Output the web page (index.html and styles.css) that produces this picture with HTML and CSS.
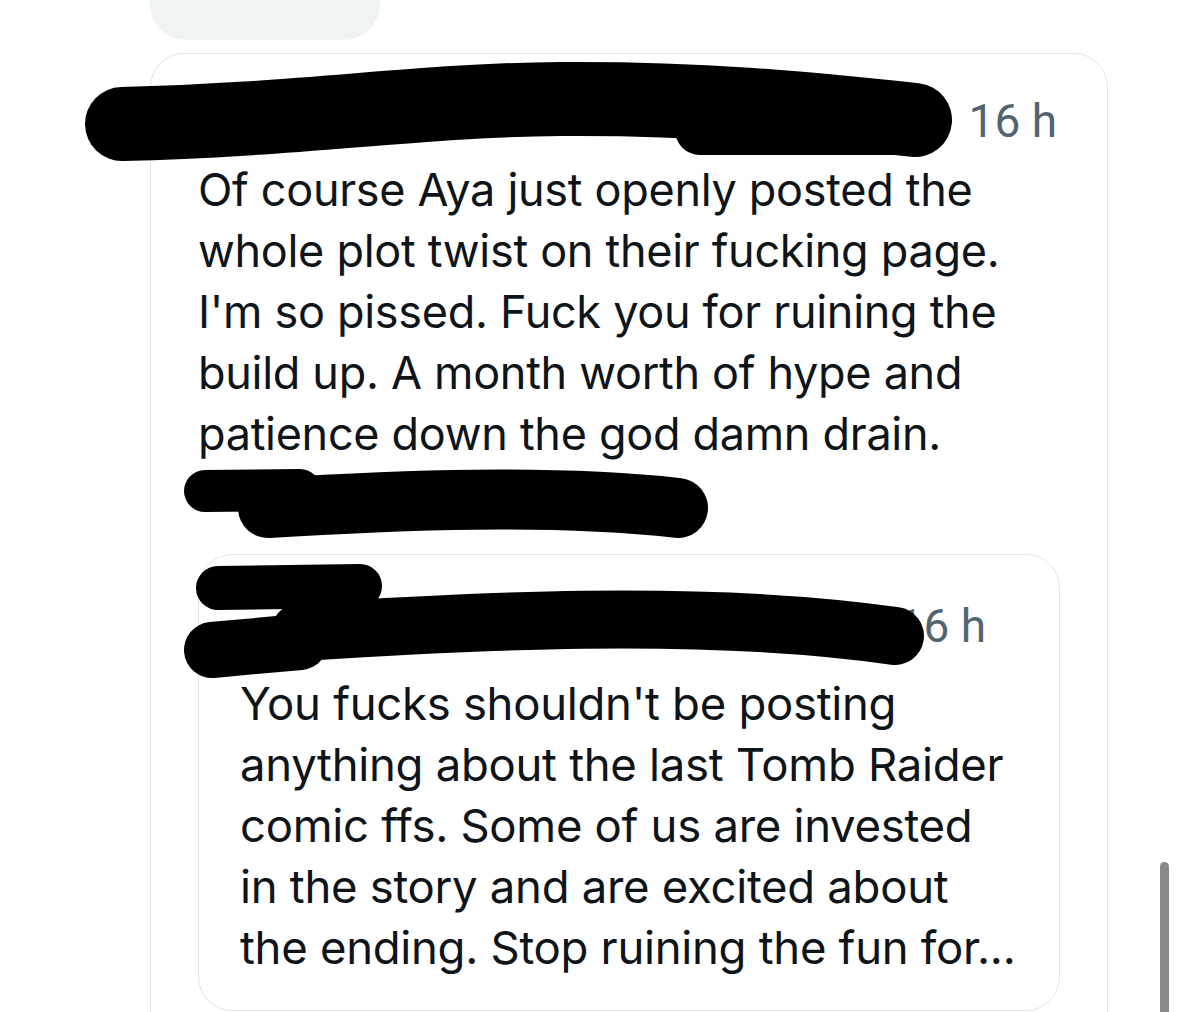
FILE: index.html
```html
<!DOCTYPE html>
<html lang="en">
<head>
    <meta charset="UTF-8">
    <meta name="viewport" content="width=device-width, initial-scale=1.0">
    <title>Reply</title>
    <link rel="stylesheet" href="styles.css">
</head>
<body>
    <div class="thread">
        <div class="chip"></div>

        <article class="post">
            <div class="post-head">
                <span class="time">16 h</span>
            </div>
            <p class="post-text">
                <span>Of course Aya just openly posted the</span>
                <span>whole plot twist on their fucking page.</span>
                <span>I'm so pissed. Fuck you for ruining the</span>
                <span>build up. A month worth of hype and</span>
                <span>patience down the god damn drain.</span>
            </p>

            <article class="quote">
                <div class="post-head">
                    <span class="time">16 h</span>
                </div>
                <p class="quote-text">
                    <span>You fucks shouldn't be posting</span>
                    <span>anything about the last Tomb Raider</span>
                    <span>comic ffs. Some of us are invested</span>
                    <span>in the story and are excited about</span>
                    <span>the ending. Stop ruining the fun for...</span>
                </p>
            </article>
        </article>
    </div>

    <div class="scrollbar"></div>

    <!-- marker strokes over the names -->
    <svg class="redactions" width="1178" height="1012" viewBox="0 0 1178 1012">
        <g fill="none" stroke="#000" stroke-linecap="round" stroke-linejoin="round">
            <path d="M122 124 C300 120 420 100 560 99 S 800 108 915 120" stroke-width="74"/>
            <path d="M700 130 L905 130" stroke-width="50"/>
            <path d="M205 491 L300 490" stroke-width="42"/>
            <path d="M268 508 C400 500 550 494 678 508" stroke-width="60"/>
            <path d="M218 588 L360 586" stroke-width="44"/>
            <path d="M212 650 L300 642" stroke-width="56"/>
            <path d="M300 632 C460 622 700 608 895 636" stroke-width="58"/>
        </g>
    </svg>
</body>
</html>
```

FILE: styles.css
```css
body {
    margin: 0;
    background: #fff;
    font-family: 'Inter', 'Roboto', sans-serif;
    color: #0f1419;
    height: 1012px;
    overflow: hidden;
}

.thread {
    padding-left: 150px;
    width: 958px;
}

.chip {
    width: 230px;
    height: 40px;
    background-color: #eff3f4;
    border-radius: 0 0 36px 36px;
}

.post {
    margin-top: 13px;
    border: 1px solid #e1e5e8;
    border-radius: 34px;
    padding: 40px 47px 60px 47px;
}

.post-head {
    display: flex;
    justify-content: flex-end;
}

.time {
    font-family: 'Roboto', sans-serif;
    font-size: 46px;
    line-height: 55px;
    color: #536471;
    padding-right: 3px;
}

.post-text,
.quote-text {
    margin: 0;
    white-space: nowrap;
}

.post-text span,
.quote-text span {
    display: block;
}

.post-text {
    margin-top: 10px;
    font-size: 45px;
    line-height: 61px;
    letter-spacing: -0.3px;
}

.quote {
    margin-top: 90px;
    border: 1px solid #e1e5e8;
    border-radius: 34px;
    padding: 44px 70px 32px 41px;
}

.quote-text {
    margin-top: 19px;
    font-size: 45.5px;
    line-height: 61px;
    letter-spacing: -0.3px;
}

.scrollbar {
    position: fixed;
    right: 9px;
    top: 862px;
    width: 9px;
    height: 160px;
    border-radius: 5px;
    background-color: #888;
}

.redactions {
    position: absolute;
    top: 0;
    left: 0;
    pointer-events: none;
}
```
